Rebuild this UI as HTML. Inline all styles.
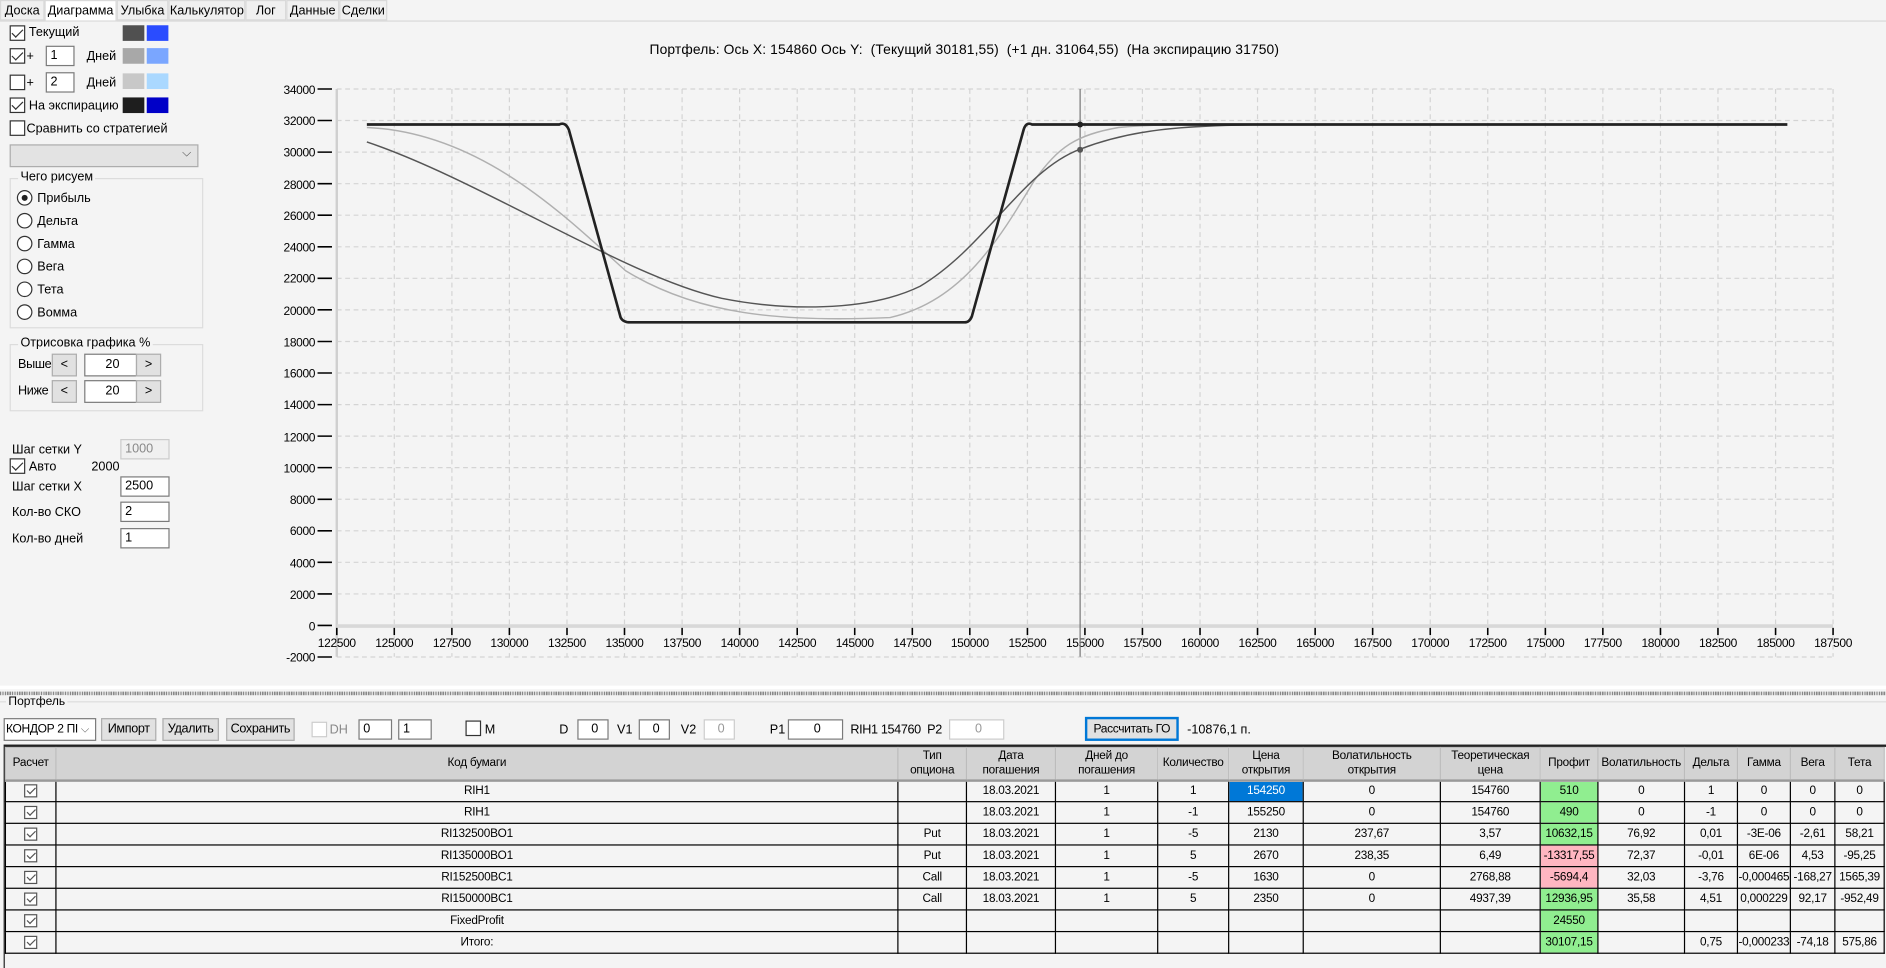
<!DOCTYPE html>
<html><head><meta charset="utf-8"><style>
*{box-sizing:border-box;margin:0;padding:0}
body{width:1886px;height:968px;background:#f4f4f4;font-family:"Liberation Sans",sans-serif;font-size:10.5px;color:#000;position:relative;overflow:hidden}
#s{position:absolute;left:0;top:0;width:1568px;height:805px;transform:scale(1.2028);transform-origin:0 0}
.a{position:absolute;white-space:nowrap}
.cb{position:absolute;width:13px;height:13px;border:1px solid #333;background:#fff}
.cb.c::after{content:"";position:absolute;left:3px;top:0px;width:4px;height:8px;border:solid #333;border-width:0 1px 1px 0;transform:rotate(45deg)}
.rd{position:absolute;width:13px;height:13px;border:1px solid #333;border-radius:50%;background:#fff}
.rd.c::after{content:"";position:absolute;left:3px;top:3px;width:5px;height:5px;border-radius:50%;background:#222}
.sw{position:absolute;width:18px;height:13px}
.tb{position:absolute;border:1px solid #7a7a7a;background:#fff;padding-left:3px;height:17px;line-height:15px}
.btn{position:absolute;border:1px solid #adadad;background:#e1e1e1;text-align:center;height:19px;line-height:17px}
.grp{position:absolute;border:1px solid #dcdcdc}
.grp span{position:absolute;top:-8px;left:6px;background:#f4f4f4;padding:0 2px}
.tab{position:absolute;top:0;height:17px;line-height:16px;border:1px solid #d9d9d9;background:#f0f0f0;text-align:center;overflow:hidden}
table{position:absolute;left:4px;top:621px;border-collapse:collapse;font-size:9.8px;letter-spacing:-0.2px;table-layout:fixed;width:1562px}
td{border:1px solid #000;height:18px;text-align:center;padding:0;overflow:hidden;white-space:nowrap}
th{background:#d3d3d3;font-weight:normal;border:1px solid #bcbcbc;border-bottom:2px solid #999;height:27px;line-height:12px;overflow:hidden}
.g{background:#90ee90}.r{background:#ffb6c1}
.ck{display:inline-block;width:11px;height:11px;border:1px solid #555;position:relative;vertical-align:middle;background:#fff}
.ck::after{content:"";position:absolute;left:3px;top:0;width:3px;height:6px;border:solid #555;border-width:0 1px 1px 0;transform:rotate(45deg)}
</style></head><body><div id="s">
<div class="tab" style="left:0;width:37px">Доска</div>
<div class="tab" style="left:37px;width:60px;background:#fff;border-bottom-color:#fff;height:18px">Диаграмма</div>
<div class="tab" style="left:97px;width:43px">Улыбка</div>
<div class="tab" style="left:140px;width:64px">Калькулятор</div>
<div class="tab" style="left:204px;width:34px">Лог</div>
<div class="tab" style="left:238px;width:44px">Данные</div>
<div class="tab" style="left:282px;width:40px">Сделки</div>
<div class="a" style="left:0;top:17px;width:1568px;border-top:1px solid #d9d9d9"></div>

<div class="cb c" style="left:8px;top:21px"></div><div class="a" style="left:24px;top:21px">Текущий</div>
<div class="sw" style="left:102px;top:21px;background:#505050"></div><div class="sw" style="left:122px;top:21px;background:#2a4cff"></div>
<div class="cb c" style="left:8px;top:40px"></div><div class="a" style="left:22px;top:41px">+</div>
<div class="tb" style="left:38px;top:38px;width:24px">1</div><div class="a" style="left:72px;top:41px">Дней</div>
<div class="sw" style="left:102px;top:40px;background:#a8a8a8"></div><div class="sw" style="left:122px;top:40px;background:#7aa6ff"></div>
<div class="cb" style="left:8px;top:62px"></div><div class="a" style="left:22px;top:63px">+</div>
<div class="tb" style="left:38px;top:60px;width:24px">2</div><div class="a" style="left:72px;top:63px">Дней</div>
<div class="sw" style="left:102px;top:61px;background:#c8c8c8"></div><div class="sw" style="left:122px;top:61px;background:#aad8ff"></div>
<div class="cb c" style="left:8px;top:81px"></div><div class="a" style="left:24px;top:82px">На экспирацию</div>
<div class="sw" style="left:102px;top:81px;background:#1e1e1e"></div><div class="sw" style="left:122px;top:81px;background:#0000c8"></div>
<div class="cb" style="left:8px;top:100px"></div><div class="a" style="left:22px;top:101px">Сравнить со стратегией</div>
<div class="a" style="left:8px;top:120px;width:157px;height:19px;border:1px solid #adadad;background:#e3e3e3"><span style="position:absolute;right:5px;top:1px;font-size:10px;color:#555">⌵</span></div>

<div class="grp" style="left:8px;top:148px;width:161px;height:125px"><span>Чего рисуем</span></div>
<div class="rd c" style="left:14px;top:158px"></div><div class="a" style="left:31px;top:159px">Прибыль</div>
<div class="rd" style="left:14px;top:177px"></div><div class="a" style="left:31px;top:178px">Дельта</div>
<div class="rd" style="left:14px;top:196px"></div><div class="a" style="left:31px;top:197px">Гамма</div>
<div class="rd" style="left:14px;top:215px"></div><div class="a" style="left:31px;top:216px">Вега</div>
<div class="rd" style="left:14px;top:234px"></div><div class="a" style="left:31px;top:235px">Тета</div>
<div class="rd" style="left:14px;top:253px"></div><div class="a" style="left:31px;top:254px">Вомма</div>

<div class="grp" style="left:8px;top:286px;width:161px;height:56px"><span>Отрисовка графика %</span></div>
<div class="a" style="left:15px;top:297px;letter-spacing:-0.3px">Выше</div>
<div class="btn" style="left:43px;top:294px;width:21px">&lt;</div><div class="tb" style="left:70px;top:294px;width:44px;text-align:center;height:19px;line-height:17px">20</div><div class="btn" style="left:113px;top:294px;width:21px">&gt;</div>
<div class="a" style="left:15px;top:319px;letter-spacing:-0.3px">Ниже</div>
<div class="btn" style="left:43px;top:316px;width:21px">&lt;</div><div class="tb" style="left:70px;top:316px;width:44px;text-align:center;height:19px;line-height:17px">20</div><div class="btn" style="left:113px;top:316px;width:21px">&gt;</div>

<div class="a" style="left:10px;top:368px">Шаг сетки Y</div>
<div class="tb" style="left:100px;top:365px;width:41px;background:#f0f0f0;color:#888;border-color:#ccc">1000</div>
<div class="cb c" style="left:8px;top:381px"></div><div class="a" style="left:24px;top:382px">Авто</div><div class="a" style="left:76px;top:382px">2000</div>
<div class="a" style="left:10px;top:399px">Шаг сетки X</div>
<div class="tb" style="left:100px;top:396px;width:41px">2500</div>
<div class="a" style="left:10px;top:420px">Кол-во СКО</div>
<div class="tb" style="left:100px;top:417px;width:41px">2</div>
<div class="a" style="left:10px;top:442px">Кол-во дней</div>
<div class="tb" style="left:100px;top:439px;width:41px">1</div>

<div class="a" style="left:540px;top:36px;font-size:11.5px;letter-spacing:0.1px">Портфель: Ось X: 154860 Ось Y:&nbsp; (Текущий 30181,55)&nbsp; (+1 дн. 31064,55)&nbsp; (На экспирацию 31750)</div>

<svg class="a" style="left:0;top:0" width="1568" height="570" font-family="Liberation Sans" font-size="10" letter-spacing="-0.3">
<g stroke="#d4d4d4" stroke-dasharray="4,3" stroke-width="1">
<path d="M327.8 74V546M375.7 74V546M423.5 74V546M471.4 74V546M519.2 74V546M567.1 74V546M614.9 74V546M662.8 74V546M710.6 74V546M758.5 74V546M806.3 74V546M854.2 74V546M902 74V546M949.8 74V546M997.7 74V546M1045.5 74V546M1093.4 74V546M1141.2 74V546M1189.1 74V546M1236.9 74V546M1284.8 74V546M1332.6 74V546M1380.5 74V546M1428.3 74V546M1476.2 74V546M1524 74V546"/>
<path d="M280 74H1524M280 100.2H1524M280 126.5H1524M280 152.7H1524M280 178.9H1524M280 205.2H1524M280 231.4H1524M280 257.6H1524M280 283.9H1524M280 310.1H1524M280 336.4H1524M280 362.6H1524M280 388.8H1524M280 415.1H1524M280 441.3H1524M280 467.5H1524M280 493.8H1524M280 546.2H1524"/>
</g>
<path d="M280 74V546" stroke="#cfcfcf" stroke-width="2"/>
<path d="M280 520.5H1524" stroke="#d8d8d8" stroke-width="3"/>
<g stroke="#000" stroke-width="1.3">
<path d="M264 74H276M264 100.2H276M264 126.5H276M264 152.7H276M264 178.9H276M264 205.2H276M264 231.4H276M264 257.6H276M264 283.9H276M264 310.1H276M264 336.4H276M264 362.6H276M264 388.8H276M264 415.1H276M264 441.3H276M264 467.5H276M264 493.8H276M264 520H276M264 546.2H276"/>
<path d="M280 522v6M327.8 522v6M375.7 522v6M423.5 522v6M471.4 522v6M519.2 522v6M567.1 522v6M614.9 522v6M662.8 522v6M710.6 522v6M758.5 522v6M806.3 522v6M854.2 522v6M902 522v6M949.8 522v6M997.7 522v6M1045.5 522v6M1093.4 522v6M1141.2 522v6M1189.1 522v6M1236.9 522v6M1284.8 522v6M1332.6 522v6M1380.5 522v6M1428.3 522v6M1476.2 522v6M1524 522v6"/>
</g>
<g text-anchor="end">
<text x="262" y="78">34000</text><text x="262" y="104">32000</text><text x="262" y="130">30000</text><text x="262" y="157">28000</text><text x="262" y="183">26000</text><text x="262" y="209">24000</text><text x="262" y="235">22000</text><text x="262" y="262">20000</text><text x="262" y="288">18000</text><text x="262" y="314">16000</text><text x="262" y="340">14000</text><text x="262" y="367">12000</text><text x="262" y="393">10000</text><text x="262" y="419">8000</text><text x="262" y="445">6000</text><text x="262" y="472">4000</text><text x="262" y="498">2000</text><text x="262" y="524">0</text><text x="262" y="550">-2000</text>
</g>
<g text-anchor="middle">
<text x="280" y="538">122500</text><text x="327.8" y="538">125000</text><text x="375.7" y="538">127500</text><text x="423.5" y="538">130000</text><text x="471.4" y="538">132500</text><text x="519.2" y="538">135000</text><text x="567.1" y="538">137500</text><text x="614.9" y="538">140000</text><text x="662.8" y="538">142500</text><text x="710.6" y="538">145000</text><text x="758.5" y="538">147500</text><text x="806.3" y="538">150000</text><text x="854.2" y="538">152500</text><text x="902" y="538">155000</text><text x="949.8" y="538">157500</text><text x="997.7" y="538">160000</text><text x="1045.5" y="538">162500</text><text x="1093.4" y="538">165000</text><text x="1141.2" y="538">167500</text><text x="1189.1" y="538">170000</text><text x="1236.9" y="538">172500</text><text x="1284.8" y="538">175000</text><text x="1332.6" y="538">177500</text><text x="1380.5" y="538">180000</text><text x="1428.3" y="538">182500</text><text x="1476.2" y="538">185000</text><text x="1524" y="538">187500</text>
</g>
<path d="M898 74V546" stroke="#777" stroke-width="1"/>
<path d="M305,106 C400,110 470,180 520,225 C580,262 650,268 740,264 C800,250 830,200 860,150 C880,122 895,112 930,106 C960,103 1000,103 1100,103.5" fill="none" stroke="#b0b0b0" stroke-width="1.2"/>
<path d="M305,118 C400,150 520,230 600,248 C650,258 720,260 765,238 C820,205 850,142 898,124 C940,108 980,104 1060,103.5" fill="none" stroke="#555" stroke-width="1.2"/>
<path d="M305,103.5 L465,103.5 Q470,101 473,108 L516,264 Q518,268 524,268 L802,268 Q806,268 808,263 L851,108 Q853,101 858,103.5 L1486,103.5" fill="none" stroke="#222" stroke-width="2.2"/>
<circle cx="898" cy="103.5" r="2.5" fill="#222"/><circle cx="898" cy="124.5" r="2.5" fill="#555"/>
</svg>

<div class="a" style="left:0;top:570px;width:1568px;height:3px;background:#fff"></div>
<div class="a" style="left:0;top:575px;width:1568px;height:3px;background:repeating-linear-gradient(90deg,#888 0 1px,#ddd 1px 2px)"></div>
<div class="a" style="left:0;top:583px;width:1568px;border-top:1px solid #dcdcdc"></div>
<div class="a" style="left:5px;top:578px;background:#f4f4f4;padding:0 2px;font-size:10px">Портфель</div>

<div class="tb" style="left:3px;top:597px;width:77px;height:19px;line-height:17px;padding-left:1px;font-size:10px;letter-spacing:-0.3px">КОНДОР 2 ПІ <span style="font-size:9px;color:#555">⌵</span></div>
<div class="btn" style="left:84px;top:597px;width:46px;letter-spacing:-0.3px">Импорт</div>
<div class="btn" style="left:135px;top:597px;width:47px;letter-spacing:-0.3px">Удалить</div>
<div class="btn" style="left:188px;top:597px;width:57px;letter-spacing:-0.3px">Сохранить</div>
<div class="cb" style="left:259px;top:600px;border-color:#ccc"></div><div class="a" style="left:274px;top:601px;color:#888">DH</div>
<div class="tb" style="left:298px;top:598px;width:28px;height:17px">0</div>
<div class="tb" style="left:331px;top:598px;width:28px;height:17px">1</div>
<div class="cb" style="left:387px;top:599px"></div><div class="a" style="left:403px;top:601px">M</div>
<div class="a" style="left:465px;top:601px">D</div><div class="tb" style="left:480px;top:598px;width:26px;text-align:center">0</div>
<div class="a" style="left:513px;top:601px">V1</div><div class="tb" style="left:531px;top:598px;width:26px;text-align:center">0</div>
<div class="a" style="left:566px;top:601px">V2</div><div class="tb" style="left:585px;top:598px;width:26px;text-align:center;border-color:#ccc;color:#999">0</div>
<div class="a" style="left:640px;top:601px">P1</div><div class="tb" style="left:655px;top:598px;width:46px;text-align:center">0</div>
<div class="a" style="left:707px;top:601px;letter-spacing:-0.3px">RIH1 154760&nbsp; P2</div><div class="tb" style="left:789px;top:598px;width:46px;text-align:center;border-color:#ccc;color:#999">0</div>
<div class="btn" style="left:902px;top:596px;width:78px;height:20px;border:2px solid #0078d7;font-size:10px;letter-spacing:-0.3px">Рассчитать ГО</div>
<div class="a" style="left:987px;top:601px">-10876,1 п.</div>

<div class="a" style="left:3px;top:619px;width:1565px;border-top:2px solid #222"></div>
<table>
<colgroup><col style="width:42px"><col style="width:700px"><col style="width:57px"><col style="width:74px"><col style="width:85px"><col style="width:59px"><col style="width:62px"><col style="width:114px"><col style="width:83px"><col style="width:48px"><col style="width:72px"><col style="width:44px"><col style="width:44px"><col style="width:37px"><col style="width:41px"></colgroup>
<tr><th>Расчет</th><th>Код бумаги</th><th>Тип<br>опциона</th><th>Дата<br>погашения</th><th>Дней до<br>погашения</th><th>Количество</th><th>Цена<br>открытия</th><th>Волатильность<br>открытия</th><th>Теоретическая<br>цена</th><th>Профит</th><th>Волатильность</th><th>Дельта</th><th>Гамма</th><th>Вега</th><th>Тета</th></tr>
<tr><td><span class="ck"></span></td><td>RIH1</td><td></td><td>18.03.2021</td><td>1</td><td>1</td><td style="background:#0078d7;color:#fff">154250</td><td>0</td><td>154760</td><td class="g">510</td><td>0</td><td>1</td><td>0</td><td>0</td><td>0</td></tr>
<tr><td><span class="ck"></span></td><td>RIH1</td><td></td><td>18.03.2021</td><td>1</td><td>-1</td><td>155250</td><td>0</td><td>154760</td><td class="g">490</td><td>0</td><td>-1</td><td>0</td><td>0</td><td>0</td></tr>
<tr><td><span class="ck"></span></td><td>RI132500BO1</td><td>Put</td><td>18.03.2021</td><td>1</td><td>-5</td><td>2130</td><td>237,67</td><td>3,57</td><td class="g">10632,15</td><td>76,92</td><td>0,01</td><td>-3E-06</td><td>-2,61</td><td>58,21</td></tr>
<tr><td><span class="ck"></span></td><td>RI135000BO1</td><td>Put</td><td>18.03.2021</td><td>1</td><td>5</td><td>2670</td><td>238,35</td><td>6,49</td><td class="r">-13317,55</td><td>72,37</td><td>-0,01</td><td>6E-06</td><td>4,53</td><td>-95,25</td></tr>
<tr><td><span class="ck"></span></td><td>RI152500BC1</td><td>Call</td><td>18.03.2021</td><td>1</td><td>-5</td><td>1630</td><td>0</td><td>2768,88</td><td class="r">-5694,4</td><td>32,03</td><td>-3,76</td><td>-0,000465</td><td>-168,27</td><td>1565,39</td></tr>
<tr><td><span class="ck"></span></td><td>RI150000BC1</td><td>Call</td><td>18.03.2021</td><td>1</td><td>5</td><td>2350</td><td>0</td><td>4937,39</td><td class="g">12936,95</td><td>35,58</td><td>4,51</td><td>0,000229</td><td>92,17</td><td>-952,49</td></tr>
<tr><td><span class="ck"></span></td><td>FixedProfit</td><td></td><td></td><td></td><td></td><td></td><td></td><td></td><td class="g">24550</td><td></td><td></td><td></td><td></td><td></td></tr>
<tr><td><span class="ck"></span></td><td>Итого:</td><td></td><td></td><td></td><td></td><td></td><td></td><td></td><td class="g">30107,15</td><td></td><td>0,75</td><td>-0,000233</td><td>-74,18</td><td>575,86</td></tr>
</table>
<div class="a" style="left:3px;top:621px;height:184px;border-left:1px solid #222"></div>
</div></body></html>
